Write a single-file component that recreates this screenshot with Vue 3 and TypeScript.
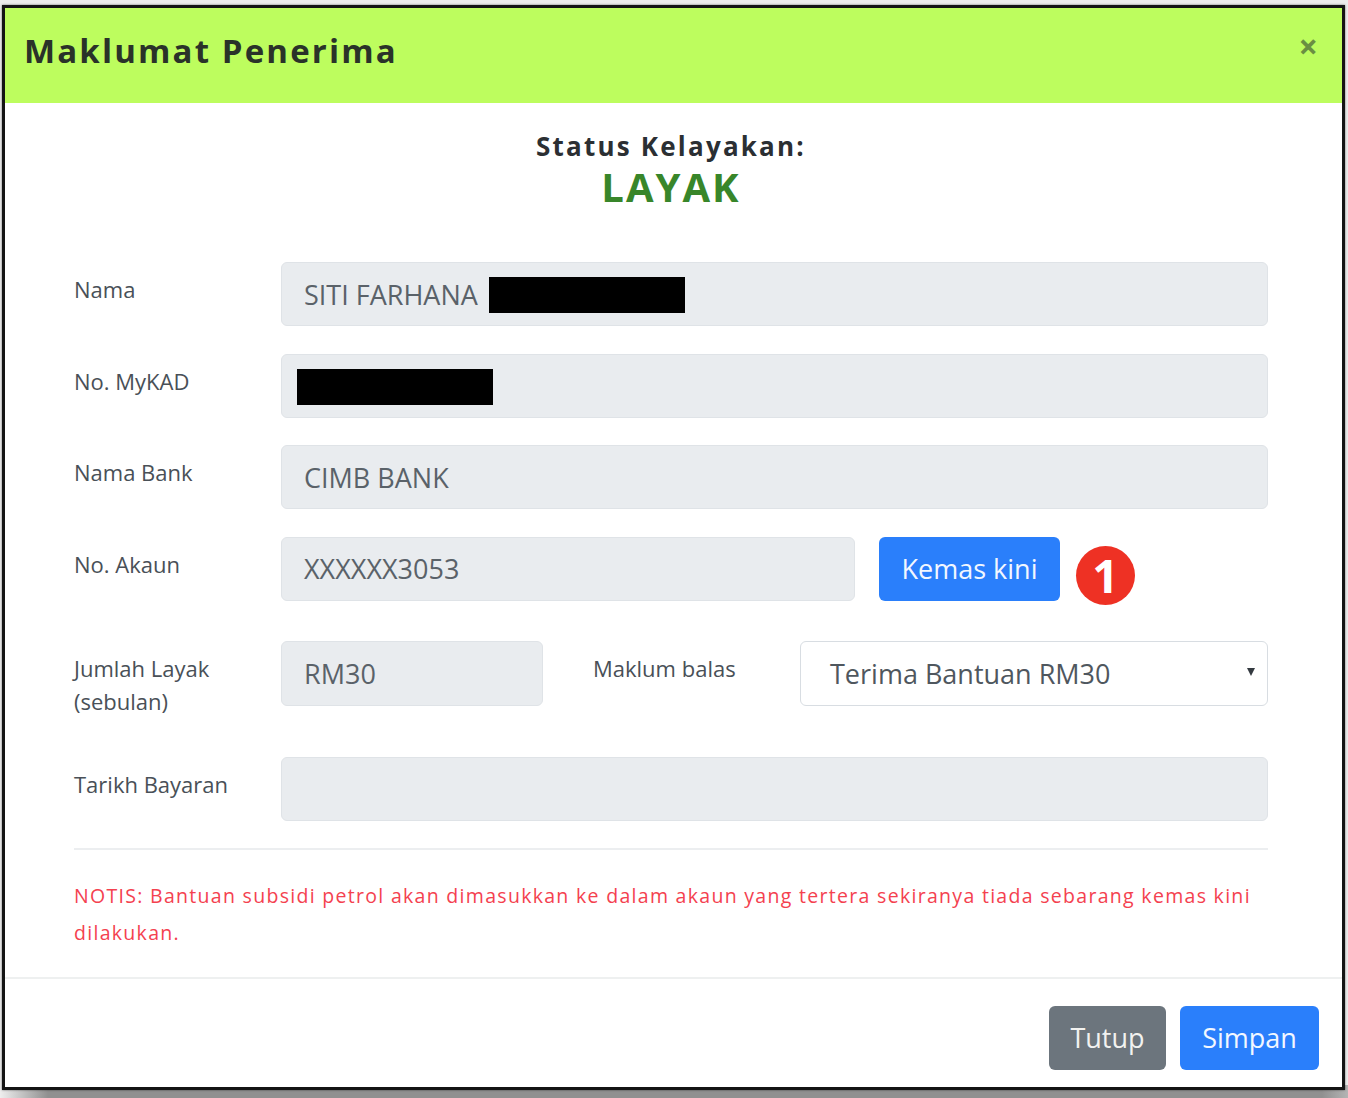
<script setup lang="ts">
interface Row { label: string; value: string; redact?: number; redactOnly?: boolean; gap: number }
const rows: Row[] = [
  { label: 'Nama', value: 'SITI FARHANA', redact: 196, gap: 28 },
  { label: 'No. MyKAD', value: '', redact: 196, redactOnly: true, gap: 27 },
  { label: 'Nama Bank', value: 'CIMB BANK', gap: 28 },
]
</script>

<template>
  <div class="page">
    <section class="modal">
      <header class="head">
        <h1>Maklumat Penerima</h1>
        <span class="close">×</span>
      </header>
      <main class="body">
        <div class="status">
          <p class="status-label">Status Kelayakan:</p>
          <p class="status-value">LAYAK</p>
        </div>
        <div v-for="r in rows" :key="r.label" class="row" :style="{ marginBottom: r.gap + 'px' }">
          <label>{{ r.label }}</label>
          <div class="field" :class="{ 'field-redact': r.redactOnly }">
            <span v-if="r.value">{{ r.value }}</span>
            <i v-if="r.redact" class="redact" :style="{ width: r.redact + 'px' }"></i>
          </div>
        </div>
        <div class="row account">
          <label>No. Akaun</label>
          <div class="field narrow">XXXXXX3053</div>
          <button class="btn primary update">Kemas kini</button>
          <span class="badge">1</span>
        </div>
        <div class="row amount">
          <label class="two">Jumlah Layak<br />(sebulan)</label>
          <div class="field small">RM30</div>
          <label class="mid">Maklum balas</label>
          <div class="select"><span>Terima Bantuan RM30</span><i class="caret"></i></div>
        </div>
        <div class="row last">
          <label>Tarikh Bayaran</label>
          <div class="field"></div>
        </div>
        <hr />
        <p class="notice">NOTIS: Bantuan subsidi petrol akan dimasukkan ke dalam akaun yang tertera sekiranya tiada sebarang kemas kini dilakukan.</p>
      </main>
      <footer class="foot">
        <button class="btn secondary">Tutup</button>
        <button class="btn primary save">Simpan</button>
      </footer>
    </section>
  </div>
</template>

<style>
html, body { margin: 0; background: #e9e9e9; }
</style>

<style scoped>
.page {
  width: 1348px;
  height: 1098px;
  box-sizing: border-box;
  padding: 5px 3px 0 2px;
  overflow: hidden;
  font-family: "Open Sans", "Noto Sans", sans-serif;
  background:
    linear-gradient(to bottom, #ececec 0 1085px, transparent 1085px),
    linear-gradient(to right, #eeeeee 0, #909090 48px, #909090 1322px, #b4b4b4 100%);
}
.modal {
  width: 1343px;
  height: 1085px;
  box-sizing: border-box;
  border: 3px solid #141414;
  background: #fff;
  display: flex;
  flex-direction: column;
  box-shadow: 0 0 2px rgba(0, 0, 0, 0.55);
}
.head {
  height: 95px;
  flex: none;
  background: #bdfd5e;
  display: flex;
  justify-content: space-between;
  box-sizing: border-box;
  padding: 0 24px 0 19px;
}
.head h1 {
  margin: 21px 0 0;
  font-size: 33px;
  line-height: 44px;
  font-weight: 700;
  letter-spacing: 2.15px;
  color: #2a3229;
}
.close {
  margin-top: 16px;
  font-size: 34px;
  line-height: 44px;
  font-weight: 700;
  color: #6a8f42;
}
.body {
  flex: 1;
  padding: 0 74px 0 69px;
}
.status {
  text-align: center;
  padding-top: 24px;
  height: 135px;
}
.status p { margin: 0; }
.status-label {
  font-size: 26px;
  line-height: 38px;
  font-weight: 700;
  letter-spacing: 2.2px;
  color: #2b2f33;
}
.status-value {
  font-size: 40px;
  line-height: 43px;
  font-weight: 700;
  letter-spacing: 2px;
  color: #38862a;
}
.row {
  display: flex;
  align-items: flex-start;
}
.row label {
  width: 207px;
  flex: none;
  font-size: 22px;
  line-height: 32px;
  color: #495057;
  padding-top: 11px;
}
.field {
  flex: 1;
  height: 64px;
  box-sizing: border-box;
  background: #e9ecef;
  border: 1.5px solid #dfe3e7;
  border-radius: 6px;
  display: flex;
  align-items: center;
  gap: 11px;
  padding: 0 22px;
  font-size: 27px;
  color: #5a6269;
}
.field-redact { padding-left: 15px; }
.redact {
  display: block;
  height: 36px;
  margin-top: 2px;
  background: #000;
}
.account { margin-bottom: 36px; }
.narrow { flex: none; width: 574px; padding-bottom: 2px; }
.btn {
  border: none;
  border-radius: 6px;
  color: #f2f7ff;
  font-family: inherit;
  font-size: 27px;
  padding: 0 0 2px;
  height: 64px;
}
.primary { background: #2a7ffb; }
.secondary { background: #6c757d; color: #f2f2f0; }
.update { width: 181px; margin-left: 24px; }
.badge {
  width: 59px;
  height: 59px;
  margin: 9px 0 0 16px;
  border-radius: 50%;
  background: #ee3124;
  color: #fff;
  font-size: 46px;
  line-height: 59px;
  font-weight: 700;
  text-align: center;
}
.amount { margin-bottom: 39px; }
.row .two { line-height: 33px; }
.amount .field { height: 65px; }
.small { flex: none; width: 262px; }
.row .mid { margin-left: 50px; }
.select {
  flex: 1;
  height: 65px;
  box-sizing: border-box;
  border: 1.5px solid #d8dde2;
  border-radius: 6px;
  background: #fff;
  display: flex;
  align-items: center;
  justify-content: space-between;
  padding: 0 12px 0 29px;
  font-size: 27px;
  color: #4f575e;
}
.caret {
  display: block;
  margin-bottom: 4px;
  border-left: 4.5px solid transparent;
  border-right: 4.5px solid transparent;
  border-top: 8px solid #343a40;
}
.last { margin-bottom: 27px; }
hr {
  margin: 0;
  border: 0;
  border-top: 2px solid #eceef0;
}
.notice {
  margin: 27px 0 0;
  font-size: 19.5px;
  line-height: 37px;
  letter-spacing: 1.3px;
  color: #f4414f;
}
.foot {
  height: 110px;
  flex: none;
  box-sizing: border-box;
  border-top: 2px solid #eef0f0;
  display: flex;
  justify-content: flex-end;
  align-items: flex-start;
  gap: 14px;
  padding: 27px 23px 0 0;
}
.foot .secondary { width: 117px; }
.foot .save { width: 139px; }
</style>
